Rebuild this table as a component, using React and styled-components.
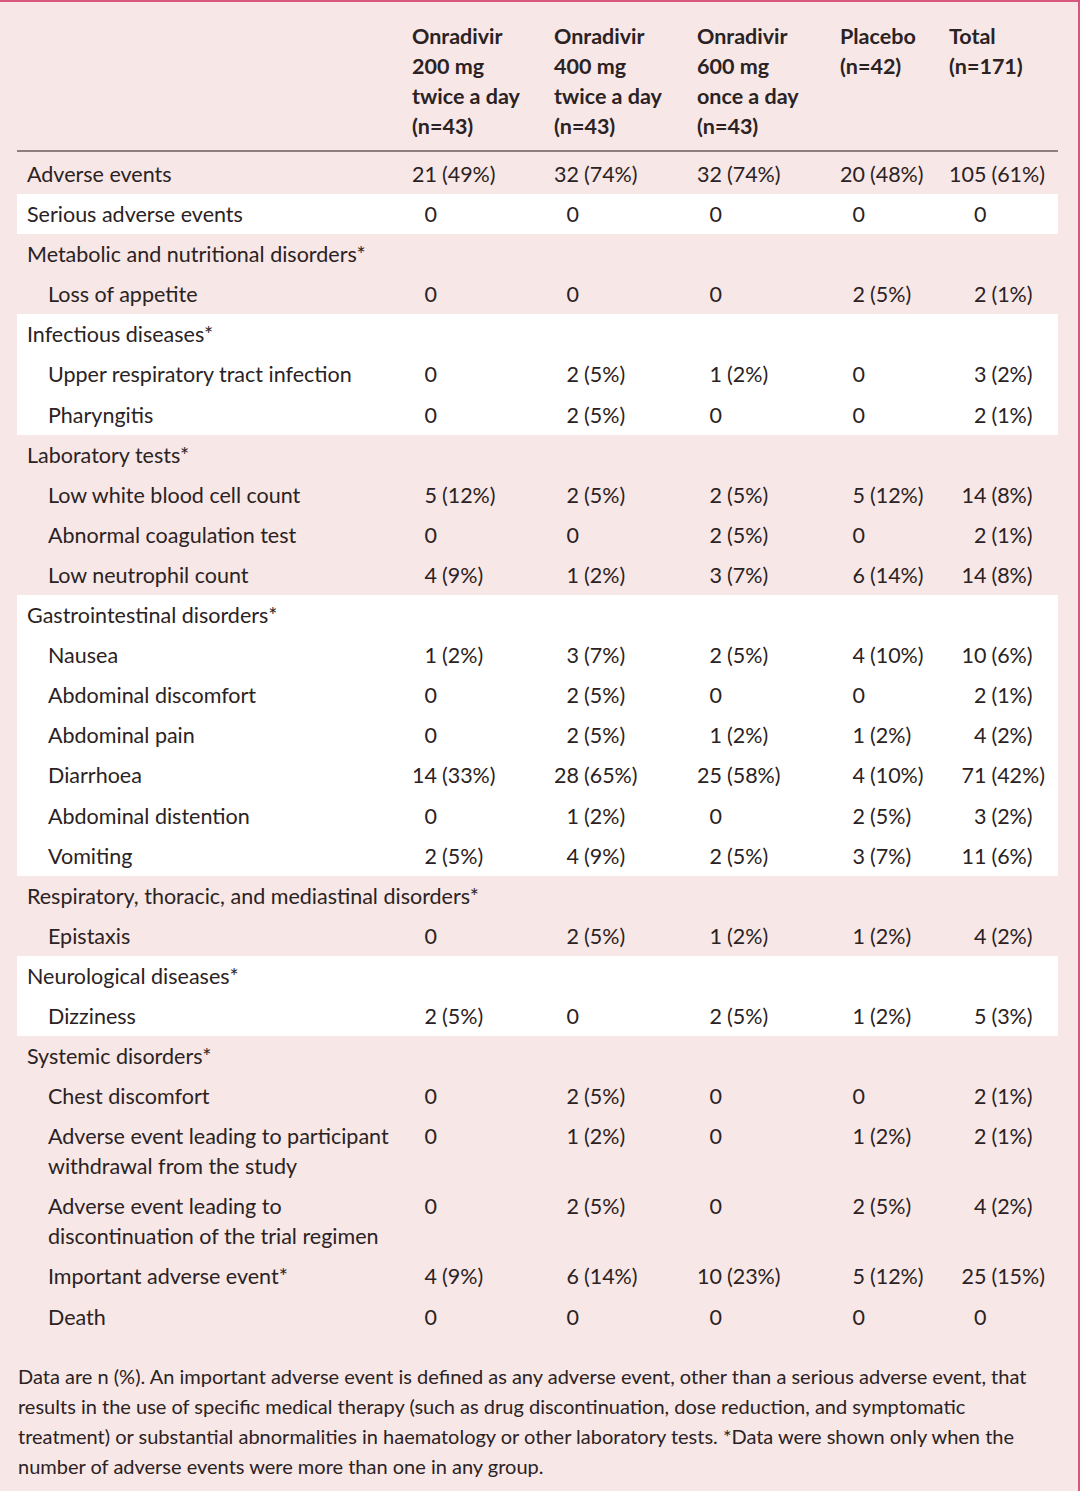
import styled, { createGlobalStyle } from 'styled-components'

const GlobalStyle = createGlobalStyle`
    html, body {
        margin: 0;
        padding: 0;
        background: #f7e7e6;
    }
    body {
        font-family: Lato, "Open Sans", sans-serif;
        color: #2b2223;
    }
`

const Page = styled.div`
    width: 1080px;
    box-sizing: border-box;
    min-height: 1491px;
    background: #f7e7e6;
    border-top: 2px solid #d9577f;
    border-right: 2px solid #d9577f;
    padding: 0 0 10px 17px;
`

const Table = styled.table`
    width: 1041px;
    border-collapse: collapse;
    table-layout: fixed;
    font-size: 21.5px;
    line-height: 30px;
`

const Col = styled.col`
    width: ${(p) => p.$w}px;
`

const HeadCell = styled.th`
    text-align: left;
    vertical-align: top;
    font-weight: 700;
    padding: 19px 0 9px 10px;
    border-bottom: 2px solid #8d7f7e;
`

const Row = styled.tr`
    background: ${(p) => (p.$white ? '#ffffff' : 'transparent')};
`

const LabelCell = styled.td`
    vertical-align: top;
    white-space: nowrap;
    padding: ${(p) => (p.$first ? '7px' : '5.06px')} 8px 5.06px ${(p) => (p.$indent ? '31px' : '10px')};
`

const ValueCell = styled.td`
    vertical-align: top;
    white-space: nowrap;
    padding: ${(p) => (p.$first ? '7px' : '5.06px')} 0 5.06px 10px;
`

const Count = styled.span`
    display: inline-block;
    width: ${(p) => p.$digits}ch;
    text-align: right;
    margin-right: 5px;
`

const Footnote = styled.p`
    margin: 24px 0 0 1px;
    font-size: 20px;
    line-height: 30px;
    white-space: nowrap;
`

const columns = [
    { head: ['Onradivir', '200 mg', 'twice a day', '(n=43)'], digits: 2, w: 142 },
    { head: ['Onradivir', '400 mg', 'twice a day', '(n=43)'], digits: 2, w: 143 },
    { head: ['Onradivir', '600 mg', 'once a day', '(n=43)'], digits: 2, w: 143 },
    { head: ['Placebo', '(n=42)'], digits: 2, w: 109 },
    { head: ['Total', '(n=171)'], digits: 3, w: 119 },
]

const groups = [
    [{ label: ['Adverse events'], values: ['21 (49%)', '32 (74%)', '32 (74%)', '20 (48%)', '105 (61%)'] }],
    [{ label: ['Serious adverse events'], values: ['0', '0', '0', '0', '0'] }],
    [
        { label: ['Metabolic and nutritional disorders*'] },
        { label: ['Loss of appetite'], indent: true, values: ['0', '0', '0', '2 (5%)', '2 (1%)'] },
    ],
    [
        { label: ['Infectious diseases*'] },
        { label: ['Upper respiratory tract infection'], indent: true, values: ['0', '2 (5%)', '1 (2%)', '0', '3 (2%)'] },
        { label: ['Pharyngitis'], indent: true, values: ['0', '2 (5%)', '0', '0', '2 (1%)'] },
    ],
    [
        { label: ['Laboratory tests*'] },
        { label: ['Low white blood cell count'], indent: true, values: ['5 (12%)', '2 (5%)', '2 (5%)', '5 (12%)', '14 (8%)'] },
        { label: ['Abnormal coagulation test'], indent: true, values: ['0', '0', '2 (5%)', '0', '2 (1%)'] },
        { label: ['Low neutrophil count'], indent: true, values: ['4 (9%)', '1 (2%)', '3 (7%)', '6 (14%)', '14 (8%)'] },
    ],
    [
        { label: ['Gastrointestinal disorders*'] },
        { label: ['Nausea'], indent: true, values: ['1 (2%)', '3 (7%)', '2 (5%)', '4 (10%)', '10 (6%)'] },
        { label: ['Abdominal discomfort'], indent: true, values: ['0', '2 (5%)', '0', '0', '2 (1%)'] },
        { label: ['Abdominal pain'], indent: true, values: ['0', '2 (5%)', '1 (2%)', '1 (2%)', '4 (2%)'] },
        { label: ['Diarrhoea'], indent: true, values: ['14 (33%)', '28 (65%)', '25 (58%)', '4 (10%)', '71 (42%)'] },
        { label: ['Abdominal distention'], indent: true, values: ['0', '1 (2%)', '0', '2 (5%)', '3 (2%)'] },
        { label: ['Vomiting'], indent: true, values: ['2 (5%)', '4 (9%)', '2 (5%)', '3 (7%)', '11 (6%)'] },
    ],
    [
        { label: ['Respiratory, thoracic, and mediastinal disorders*'] },
        { label: ['Epistaxis'], indent: true, values: ['0', '2 (5%)', '1 (2%)', '1 (2%)', '4 (2%)'] },
    ],
    [
        { label: ['Neurological diseases*'] },
        { label: ['Dizziness'], indent: true, values: ['2 (5%)', '0', '2 (5%)', '1 (2%)', '5 (3%)'] },
    ],
    [
        { label: ['Systemic disorders*'] },
        { label: ['Chest discomfort'], indent: true, values: ['0', '2 (5%)', '0', '0', '2 (1%)'] },
        {
            label: ['Adverse event leading to participant', 'withdrawal from the study'],
            indent: true,
            values: ['0', '1 (2%)', '0', '1 (2%)', '2 (1%)'],
        },
        {
            label: ['Adverse event leading to', 'discontinuation of the trial regimen'],
            indent: true,
            values: ['0', '2 (5%)', '0', '2 (5%)', '4 (2%)'],
        },
        { label: ['Important adverse event*'], indent: true, values: ['4 (9%)', '6 (14%)', '10 (23%)', '5 (12%)', '25 (15%)'] },
        { label: ['Death'], indent: true, values: ['0', '0', '0', '0', '0'] },
    ],
]

const footnote = [
    'Data are n (%). An important adverse event is defined as any adverse event, other than a serious adverse event, that',
    'results in the use of specific medical therapy (such as drug discontinuation, dose reduction, and symptomatic',
    'treatment) or substantial abnormalities in haematology or other laboratory tests. *Data were shown only when the',
    'number of adverse events were more than one in any group.',
]

function Value({ text, digits }) {
    const [count, pct] = text.split(' ')
    return (
        <>
            <Count $digits={digits}>{count}</Count>
            {pct}
        </>
    )
}

function Lines({ lines }) {
    return lines.map((line, i) => (
        <span key={i}>
            {i > 0 && <br />}
            {line}
        </span>
    ))
}

export default function App() {
    return (
        <>
            <GlobalStyle />
            <Page>
                <Table>
                    <colgroup>
                        <Col $w={385} />
                        {columns.map((c, i) => (
                            <Col key={i} $w={c.w} />
                        ))}
                    </colgroup>
                    <thead>
                        <tr>
                            <HeadCell />
                            {columns.map((c, i) => (
                                <HeadCell key={i}>
                                    <Lines lines={c.head} />
                                </HeadCell>
                            ))}
                        </tr>
                    </thead>
                    <tbody>
                        {groups.map((group, g) =>
                            group.map((row, r) => (
                                <Row key={`${g}-${r}`} $white={g % 2 === 1}>
                                    <LabelCell
                                        $indent={row.indent}
                                        $first={g === 0}
                                        colSpan={row.values ? 1 : columns.length + 1}
                                    >
                                        <Lines lines={row.label} />
                                    </LabelCell>
                                    {row.values &&
                                        columns.map((c, i) => (
                                            <ValueCell key={i} $first={g === 0}>
                                                <Value text={row.values[i]} digits={c.digits} />
                                            </ValueCell>
                                        ))}
                                </Row>
                            ))
                        )}
                    </tbody>
                </Table>
                <Footnote>
                    <Lines lines={footnote} />
                </Footnote>
            </Page>
        </>
    )
}
